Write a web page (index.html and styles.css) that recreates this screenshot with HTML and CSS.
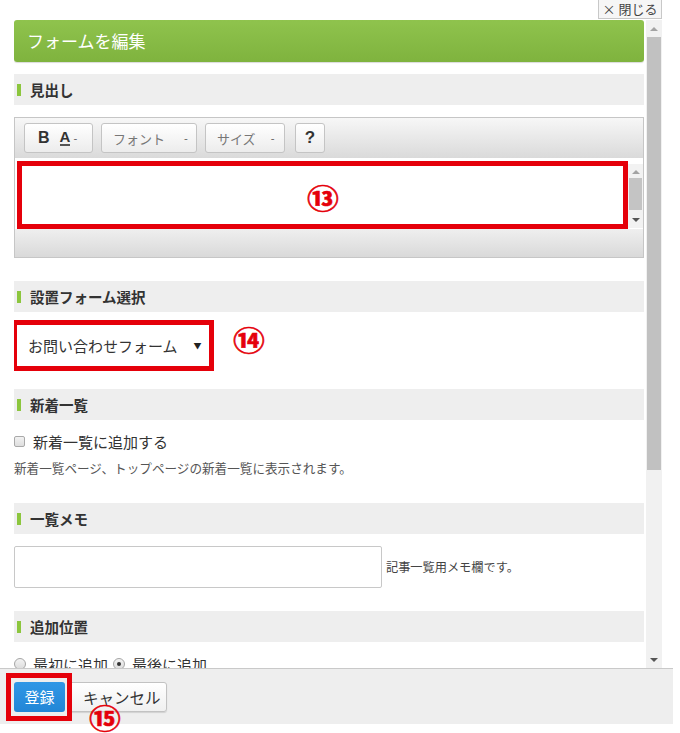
FILE: index.html
```html
<!DOCTYPE html>
<html lang="ja">
<head>
<meta charset="utf-8">
<title>フォームを編集</title>
<link rel="stylesheet" href="styles.css">
</head>
<body>
<div class="topbar"><div class="close-btn">× 閉じる</div></div>
<div class="main">
  <div class="content">
    <div class="title">フォームを編集</div>

    <div class="sec-h"><span class="mark"></span>見出し</div>
    <div class="editor">
      <div class="toolbar">
        <div class="tb-btn tb-ba"><span class="tb-b">B</span><span class="tb-a">A</span><span class="caret">-</span></div>
        <div class="tb-btn tb-font">フォント<span class="caret">-</span></div>
        <div class="tb-btn tb-size">サイズ<span class="caret">-</span></div>
        <div class="tb-btn tb-help">?</div>
      </div>
      <div class="edit-area">
        <div class="edit-box"></div>
        <div class="mini-scroll">
          <span class="tri up"></span>
          <span class="mini-thumb"></span>
          <span class="tri down"></span>
        </div>
      </div>
      <div class="edit-foot"></div>
    </div>

    <div class="sec-h sec-form"><span class="mark"></span>設置フォーム選択</div>
    <div class="select-wrap"><span class="select-text">お問い合わせフォーム</span><span class="select-arrow">▼</span></div>

    <div class="sec-h sec-news"><span class="mark"></span>新着一覧</div>
    <label class="check-row"><span class="checkbox"></span>新着一覧に追加する</label>
    <div class="hint">新着一覧ページ、トップページの新着一覧に表示されます。</div>

    <div class="sec-h sec-memo"><span class="mark"></span>一覧メモ</div>
    <div class="memo-row"><div class="memo-input"></div><span class="memo-note">記事一覧用メモ欄です。</span></div>

    <div class="sec-h sec-pos"><span class="mark"></span>追加位置</div>
    <div class="radio-row">
      <span class="radio"></span><span class="radio-label">最初に追加</span>
      <span class="radio checked"></span><span class="radio-label">最後に追加</span>
    </div>
  </div>
  <div class="vscroll">
    <span class="tri up"></span>
    <span class="vthumb"></span>
    <span class="vspace"></span>
    <span class="tri down"></span>
  </div>
</div>
<div class="footer">
  <div class="hl-btn"><div class="btn-primary">登録</div></div>
  <div class="btn-cancel">キャンセル</div>
</div>

<span class="anno anno13">⑬</span>
<span class="anno anno14">⑭</span>
<span class="anno anno15">⑮</span>
</body>
</html>
```
FILE: styles.css
```css
* { box-sizing: border-box; }
html, body { margin: 0; padding: 0; background: #fff; }
body {
  width: 680px;
  height: 733px;
  overflow: hidden;
  position: relative;
  font-family: "Noto Sans CJK JP", "Noto Sans", sans-serif;
  color: #333;
}

.topbar {
  height: 20px;
  display: flex;
  justify-content: flex-end;
  padding-right: 18px;
}
.close-btn {
  width: 64px;
  height: 19px;
  border: 1px solid #c8c8c8;
  border-top: none;
  background: #f6f6f6;
  font-size: 13px;
  line-height: 17px;
  text-align: center;
  color: #444;
}

.main {
  display: flex;
  height: 648px;
  padding-left: 14px;
}
.content {
  width: 630px;
  height: 648px;
  overflow: hidden;
}

.title {
  height: 42px;
  border-radius: 3px;
  background: linear-gradient(#8fc34d, #7fb33e);
  color: #fff;
  font-size: 17px;
  line-height: 42px;
  padding-left: 13px;
  margin-bottom: 12px;
  box-shadow: 0 1px 1px rgba(0,0,0,0.15);
}

.sec-h {
  height: 31px;
  background: #eeeeee;
  display: flex;
  align-items: center;
  padding-left: 3px;
  font-size: 14.5px;
  font-weight: bold;
  color: #333;
}
.mark {
  width: 4px;
  height: 12px;
  background: #8cc63e;
  margin-right: 9px;
}

.editor {
  margin-top: 12px;
  border: 1px solid #c6c6c6;
  height: 141px;
  display: flex;
  flex-direction: column;
}
.toolbar {
  height: 40px;
  background: linear-gradient(#f7f7f7, #dadada);
  display: flex;
  align-items: flex-start;
  padding: 5px 0 0 9px;
}
.tb-btn {
  height: 30px;
  border: 1px solid #c4c4c4;
  border-radius: 3px;
  background: linear-gradient(#ffffff, #ececec);
  display: flex;
  align-items: center;
  font-size: 13px;
  color: #777;
}
.tb-ba { width: 69px; padding-left: 13px; }
.tb-b { font-weight: bold; font-size: 16px; color: #333; font-family: "Liberation Sans", sans-serif; }
.tb-a {
  margin-left: 10px;
  font-weight: bold;
  font-size: 15px;
  color: #333;
  font-family: "Liberation Sans", sans-serif;
  border-bottom: 2px solid #555;
  line-height: 14px;
}
.caret { font-size: 11px; color: #555; margin-left: 3px; }
.tb-font { width: 96px; margin-left: 8px; padding-left: 11px; }
.tb-font .caret { margin-left: 19px; }
.tb-size { width: 80px; margin-left: 8px; padding-left: 11px; }
.tb-size .caret { margin-left: 15px; }
.tb-help {
  width: 30px;
  margin-left: 10px;
  justify-content: center;
  font-weight: bold;
  font-size: 17px;
  color: #333;
  font-family: "Liberation Sans", sans-serif;
}

.edit-area {
  height: 71px;
  background: #fff;
  display: flex;
  padding: 3px 0 0 2px;
}
.edit-box {
  width: 611px;
  height: 68px;
  border: 5px solid #e5000a;
  background: #fff;
}
.mini-scroll {
  width: 15px;
  height: 64px;
  margin-top: 3px;
  background: #f2f2f2;
  display: flex;
  flex-direction: column;
  align-items: center;
}
.mini-thumb {
  width: 13px;
  height: 32px;
  background: #c4c4c4;
  margin-top: 4px;
}
.mini-scroll .tri.up { margin-top: 6px; }
.mini-scroll .tri.down { margin-top: 8px; }

.tri { width: 0; height: 0; display: block; }
.tri.up { border-left: 4px solid transparent; border-right: 4px solid transparent; border-bottom: 4px solid #a3a3a3; }
.tri.down { border-left: 4px solid transparent; border-right: 4px solid transparent; border-top: 4px solid #555; }

.edit-foot {
  flex: 1;
  background: linear-gradient(#efefef, #d9d9d9);
}

.sec-form { margin-top: 23px; }
.select-wrap {
  margin-top: 8px;
  margin-left: -2px;
  width: 202px;
  height: 51px;
  border: 5px solid #e5000a;
  background: #fff;
  display: flex;
  align-items: center;
  padding-left: 11px;
  font-size: 15px;
  color: #333;
}
.select-arrow { font-size: 8px; margin-left: 16px; color: #222; }

.sec-news { margin-top: 18px; }
.check-row {
  margin-top: 11px;
  height: 20px;
  display: flex;
  align-items: center;
  font-size: 15px;
  color: #333;
}
.checkbox {
  width: 11px;
  height: 11px;
  border: 1px solid #a9a9a9;
  border-radius: 2px;
  background: linear-gradient(#f2f2f2, #dedede);
  margin-right: 8px;
}
.hint {
  margin-top: 8px;
  height: 18px;
  font-size: 12.6px;
  line-height: 18px;
  color: #555;
  white-space: nowrap;
}

.sec-memo { margin-top: 26px; }
.memo-row {
  margin-top: 12px;
  height: 42px;
  display: flex;
  align-items: center;
}
.memo-input {
  width: 368px;
  height: 42px;
  border: 1px solid #c8c8c8;
  border-radius: 2px;
  background: #fff;
}
.memo-note { font-size: 12.2px; color: #444; margin-left: 4px; }

.sec-pos { margin-top: 23px; }
.radio-row {
  margin-top: 12px;
  height: 20px;
  display: flex;
  align-items: center;
  font-size: 15px;
  color: #333;
}
.radio {
  width: 12px;
  height: 12px;
  border-radius: 50%;
  border: 1px solid #a5a5a5;
  background: linear-gradient(#f3f3f3, #dcdcdc);
  margin-right: 7px;
  position: relative;
}
.radio.checked::after {
  content: "";
  position: absolute;
  left: 3px;
  top: 3px;
  width: 4px;
  height: 4px;
  border-radius: 50%;
  background: #333;
}
.radio-label { margin-right: 5px; }

.vscroll {
  width: 16px;
  margin-left: 2px;
  height: 648px;
  background: #f1f1f1;
  display: flex;
  flex-direction: column;
  align-items: center;
}
.vscroll .tri.up { margin-top: 7px; }
.vthumb {
  width: 14px;
  height: 433px;
  background: #c1c1c1;
  margin-top: 6px;
}
.vspace { flex: 1; }
.vscroll .tri.down { margin-bottom: 6px; }

.footer {
  width: 673px;
  height: 56px;
  background: #eeeeee;
  border-top: 1px solid #c9c9c9;
  display: flex;
  align-items: flex-start;
  padding: 4px 0 0 6px;
}
.hl-btn {
  border: 5px solid #e5000a;
  padding: 4px 2px 4px 3px;
  position: relative;
  z-index: 1;
}
.btn-primary {
  width: 51px;
  height: 30px;
  border-radius: 3px;
  background: linear-gradient(#3097e6, #2286d6);
  color: #fff;
  font-size: 15px;
  line-height: 30px;
  text-align: center;
}
.btn-cancel {
  margin-left: -4px;
  margin-top: 9px;
  width: 99px;
  height: 30px;
  border: 1px solid #c2c2c2;
  border-radius: 3px;
  background: linear-gradient(#ffffff, #f0f0f0);
  box-shadow: 0 1px 1px rgba(0,0,0,0.12);
  font-size: 15.5px;
  line-height: 28px;
  padding-left: 14px;
  color: #333;
}

.anno {
  position: absolute;
  color: #e5000a;
  font-weight: bold;
  font-size: 27px;
  line-height: 1;
  z-index: 2;
  transform: scaleX(1.18);
  transform-origin: left top;
  -webkit-text-stroke: 0.5px #e5000a;
}
.anno13 { left: 307px; top: 184px; }
.anno14 { left: 233px; top: 326px; }
.anno15 { left: 89px; top: 704px; }
```
